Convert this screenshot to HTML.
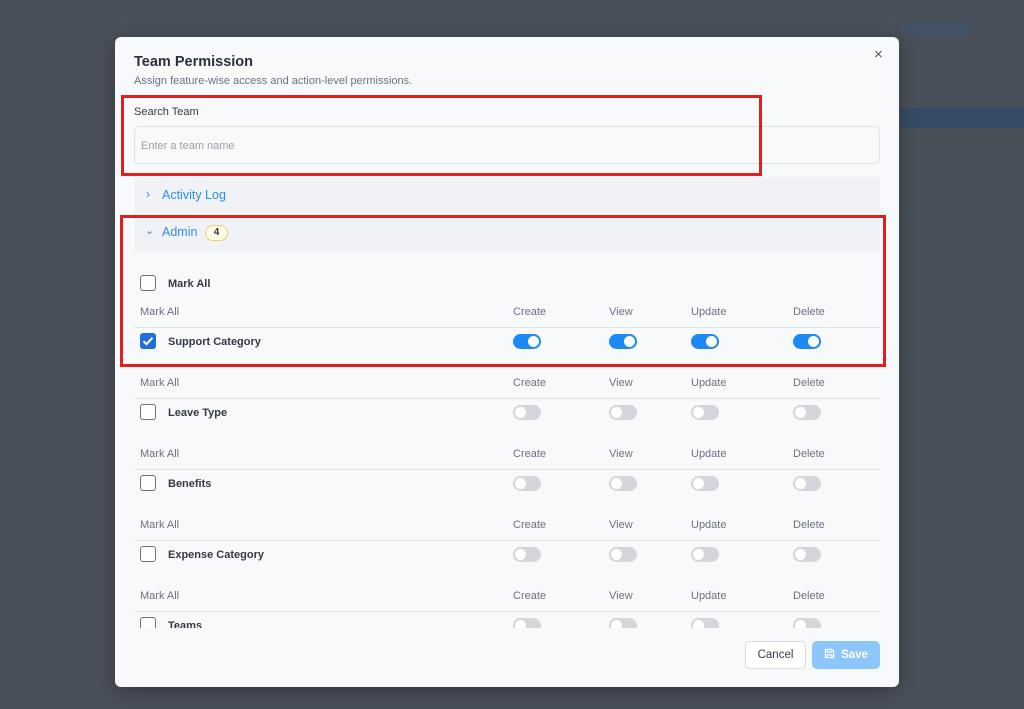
<!DOCTYPE html>
<html><head><meta charset="utf-8"><style>
*{box-sizing:border-box;margin:0;padding:0}
body{width:1024px;height:709px;background:#4a5059;font-family:"Liberation Sans",sans-serif;position:relative;overflow:hidden}
.a{position:absolute}
.m{left:115px;top:37px;width:784px;height:650px;background:#f8f9fb;border-radius:6px;box-shadow:0 4px 20px rgba(0,0,0,.3)}
.t{font-size:11px;color:#6b7280}
.b{font-size:11px;font-weight:bold;color:#333a45}
.cb{width:16px;height:16px;border:1.5px solid #6b7280;border-radius:3px;background:#fff}
.tg{width:28px;height:15px;border-radius:8px;background:#d4d6db}
.tg::after{content:"";position:absolute;left:2px;top:2px;width:11px;height:11px;border-radius:50%;background:#fff}
.tg.on{background:#1e88f5}
.tg.on::after{left:15px}
.ln{height:1px;background:#dfe2e7;left:134px;width:746px}
.red{border:3px solid #e02020}
</style></head><body>
<div class="a" style="left:900px;top:108px;width:124px;height:20px;background:#2a4a70;opacity:.6"></div>
<div class="a" style="left:902px;top:22px;width:70px;height:14px;border-radius:7px;background:#3e5573;opacity:.6"></div>
<div class="a m"></div>
<div class="a" style="left:134px;top:54px;font-size:14.5px;font-weight:bold;color:#2b313b">Team Permission</div>
<div class="a" style="left:134px;top:75px;font-size:11px;color:#6b7280">Assign feature-wise access and action-level permissions.</div>
<div class="a" style="left:874px;top:46px;font-size:15px;color:#555">×</div>
<div class="a" style="left:134px;top:106px;font-size:11px;color:#333a45">Search Team</div>
<div class="a" style="left:134px;top:126px;width:746px;height:38px;border:1px solid #dfe2e7;border-radius:5px;background:#f8f9fb"></div>
<div class="a" style="left:141px;top:140px;font-size:11px;color:#9aa0a8">Enter a team name</div>
<div class="a" style="left:134px;top:177px;width:746px;height:36px;background:#f0f2f5"></div>
<div class="a" style="left:146px;top:187px;font-size:12px;color:#2b8ef2">›</div>
<div class="a" style="left:162px;top:188px;font-size:12.5px;color:#2b8ef2">Activity Log</div>
<div class="a" style="left:134px;top:214px;width:746px;height:37px;background:#f0f2f5"></div>
<div class="a" style="left:145px;top:224px;font-size:11px;color:#2b8ef2">⌄</div>
<div class="a" style="left:162px;top:225px;font-size:12.5px;color:#2b8ef2">Admin</div>
<div class="a" style="left:205px;top:225px;width:23px;height:16px;border:1px solid #f0cf6a;background:#fffbe8;border-radius:8px;font-size:10px;font-weight:bold;text-align:center;line-height:14px;color:#333">4</div>
<div class="a cb" style="left:140px;top:275px"></div>
<div class="a b" style="left:168px;top:278px">Mark All</div>
<div class="a" style="left:0;top:0;width:1024px;height:628px;overflow:hidden">
<div id="rows"></div>
</div>
<div class="a red" style="left:121px;top:95px;width:641px;height:81px"></div>
<div class="a red" style="left:120px;top:215px;width:766px;height:152px"></div>
<div class="a" style="left:745px;top:641px;width:61px;height:28px;border:1px solid #d7dae0;border-radius:5px;background:#fff;font-size:11.5px;color:#333a45;text-align:center;line-height:26px">Cancel</div>
<div class="a" style="left:812px;top:641px;width:68px;height:28px;border-radius:5px;background:#8cc6fb;font-size:11.5px;font-weight:bold;color:#fff;text-align:center;line-height:28px">
<svg width="11" height="11" viewBox="0 0 12 12" style="vertical-align:-1px;margin-right:6px" fill="none" stroke="#fff" stroke-width="1.3"><path d="M1.5 1.5h7l2 2v7h-9z M3.5 1.5v3h4v-3 M3.5 10.5v-3h5v3"/></svg>Save</div>
<script>
var names=["Support Category","Leave Type","Benefits","Expense Category","Teams"];
var h="";
for(var i=0;i<5;i++){var y=306+i*71;
 var on=i==0;
 h+='<div class="a t" style="left:140px;top:'+y+'px">Mark All</div>';
 [["Create",513],["View",609],["Update",691],["Delete",793]].forEach(function(c){
  h+='<div class="a t" style="left:'+c[1]+'px;top:'+y+'px">'+c[0]+'</div>';
  h+='<div class="a tg'+(on?' on':'')+'" style="left:'+c[1]+'px;top:'+(y+28)+'px"></div>';});
 h+='<div class="a ln" style="top:'+(y+21)+'px"></div>';
 h+= on?'<div class="a" style="left:140px;top:'+(y+27)+'px;width:16px;height:16px;border-radius:3px;background:#1e6fd9"><svg width="16" height="16" viewBox="0 0 16 16"><path d="M3.5 8.2l3 3 6-6.5" stroke="#fff" stroke-width="2" fill="none"/></svg></div>'
  :'<div class="a cb" style="left:140px;top:'+(y+27)+'px"></div>';
 h+='<div class="a b" style="left:168px;top:'+(y+30)+'px">'+names[i]+'</div>';}
document.getElementById("rows").innerHTML=h;
</script>
</body></html>
